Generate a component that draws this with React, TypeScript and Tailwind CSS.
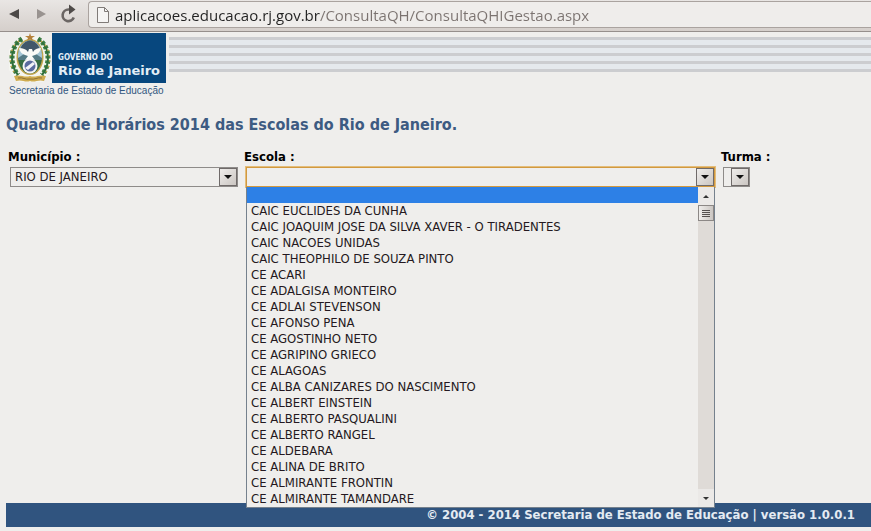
import { useState } from "react";
import type { ReactNode } from "react";

const SCHOOLS = [
  "",
  "CAIC EUCLIDES DA CUNHA",
  "CAIC JOAQUIM JOSE DA SILVA XAVER - O TIRADENTES",
  "CAIC NACOES UNIDAS",
  "CAIC THEOPHILO DE SOUZA PINTO",
  "CE ACARI",
  "CE ADALGISA MONTEIRO",
  "CE ADLAI STEVENSON",
  "CE AFONSO PENA",
  "CE AGOSTINHO NETO",
  "CE AGRIPINO GRIECO",
  "CE ALAGOAS",
  "CE ALBA CANIZARES DO NASCIMENTO",
  "CE ALBERT EINSTEIN",
  "CE ALBERTO PASQUALINI",
  "CE ALBERTO RANGEL",
  "CE ALDEBARA",
  "CE ALINA DE BRITO",
  "CE ALMIRANTE FRONTIN",
  "CE ALMIRANTE TAMANDARE",
];

const STRIPES = [1, 2, 3, 4, 5];

function BrowserBar() {
  return (
    <div className="flex h-8 items-start border-b border-[#968f8c] bg-linear-to-b from-[#e9e6e4] to-[#d5cfcb]">
      <div className="flex h-7 items-center">
        <button aria-label="Voltar" className="ml-2 flex w-7 justify-start">
          <svg width="12" height="12" viewBox="0 0 12 12">
            <path d="M1 6 11 1v10z" fill="#4c4947" />
          </svg>
        </button>
        <button aria-label="Avançar" className="flex w-6 justify-start">
          <svg width="12" height="12" viewBox="0 0 12 12">
            <path d="M10 6 1 1v10z" fill="#999390" />
          </svg>
        </button>
        <button aria-label="Recarregar" className="flex w-7 justify-start">
          <svg width="18" height="20" viewBox="0 0 18 20">
            <path d="M10 5.500H8.500a5.800 5.800 0 1 0 5.300 8" fill="none" stroke="#6b6664" strokeWidth="2.600" />
            <path d="M9 .5 15.500 5.500 9 10.500z" fill="#4f4b49" />
          </svg>
        </button>
      </div>
      <div className="mt-px flex h-[27px] flex-1 items-center rounded-l border border-r-0 border-[#aaa39f] bg-[#efedeb] pl-2">
        <svg width="12" height="16" viewBox="0 0 12 16" className="mr-1.5 shrink-0">
          <path d="M.5.5h7l4 4v11H.5z" fill="#f6f5f4" stroke="#807b78" />
          <path d="M7.500.5v4h4" fill="none" stroke="#807b78" />
        </svg>
        {/* the path part of the address is greyed out */}
        <input
          aria-label="Endereço"
          defaultValue="aplicacoes.educacao.rj.gov.br/ConsultaQH/ConsultaQHIGestao.aspx"
          className="min-w-0 flex-1 bg-linear-to-r from-[#222] from-[205px] to-[#7b7370] to-[205px] bg-clip-text font-['Open_Sans',sans-serif] text-[15px] leading-6 text-transparent outline-none"
        />
      </div>
    </div>
  );
}

function Crest() {
  return (
    <svg width="44" height="50" viewBox="0 0 44 50" aria-hidden="true">
      <path d="M13 3h18l12 14v20l-8 12H9L1 37V17z" fill="#f4f5f0" />
      <path d="M14 6C2 13 1 31 10 42M30 6c12 7 13 25 4 36" fill="none" stroke="#3f7f45" strokeWidth="5" strokeDasharray="3 2" />
      <path d="M14 6C2 13 1 31 10 42M30 6c12 7 13 25 4 36" fill="none" stroke="#2f6f3b" strokeWidth="2" />
      <path d="M11 8C1 15 0 30 6 39M33 8c10 7 11 22 5 31" fill="none" stroke="#c2a548" strokeWidth="1.500" strokeDasharray="1.500 4" />
      <ellipse cx="22" cy="24" rx="13.500" ry="18" fill="#c2a44c" />
      <ellipse cx="22" cy="24" rx="12" ry="16.500" fill="#356b42" />
      <path d="M10 25C9 15 15 7.500 22 7.500S35 15 34 25z" fill="#a5c5d4" />
      <path d="M12 16c2-5 6-8.500 10-8.500S30 11 32 16l-6 3h-8z" fill="#41576a" />
      <path d="m10 25 6-4 6 2 6-2 6 4v2H10z" fill="#557a84" />
      <path d="M11 15c4 0 7 1 9 4l1-3h3l1 3c2-3 4-4 8-4-1 4-3 6-6 7l-3 1 3 4-5-1-5 1 3-4-3-1c-3-1-5-3-6-7z" fill="#fafaf7" />
      <circle cx="22" cy="33" r="7.500" fill="#f5f5f6" />
      <circle cx="22" cy="33" r="5.500" fill="#596a9e" />
      <path d="m17 35 8-6 2 2-7 6z" fill="#f1f2f6" />
      <path d="M6 43c7-2 10 2 16 0 6 2 9-2 16 0l-2 5c-6-2-9 2-14 0-5 2-8-2-14 0z" fill="#cfab4e" />
      <path d="M10 45c5-1 7 2 12 1 5 1 7-2 12-1" fill="none" stroke="#8d7136" />
      <path d="m22 0 1 3h4l-3 2 1 3-3-2-3 2 1-3-3-2h4z" fill="#b5813b" />
    </svg>
  );
}

function Banner() {
  return (
    <header className="flex h-18">
      <div className="ml-2 w-40 shrink-0">
        <div className="flex w-[158px]">
          <Crest />
          <div className="flex h-[50px] flex-1 flex-col justify-end bg-[#07477e] pb-1 pl-1.5 font-bold whitespace-nowrap text-[#e3eef6]">
            <span className="text-[8px] leading-[10px]">GOVERNO DO</span>
            <span className="font-['DejaVu_Sans',sans-serif] text-[13px] leading-4">Rio de Janeiro</span>
          </div>
        </div>
        <p className="pl-px font-['Liberation_Sans',sans-serif] text-[10px] leading-4 whitespace-nowrap text-[#31577f]">
          Secretaria de Estado de Educação
        </p>
      </div>
      <div className="mt-1 ml-px flex flex-1 flex-col">
        {STRIPES.map((n) => (
          <div key={n} className="h-2 border-b-5 border-[#e5e9ed] bg-[#cccdd0] last:h-[3px] last:border-0" />
        ))}
      </div>
    </header>
  );
}

function ArrowBox() {
  return (
    <span className="pointer-events-none flex w-[18px] shrink-0 items-center justify-center border border-[#6f6a69] bg-linear-to-br from-[#efedeb] to-[#cbc6c2]">
      <svg width="8" height="4" viewBox="0 0 8 4">
        <path d="M0 0h8L4 4z" fill="#111" />
      </svg>
    </span>
  );
}

interface FieldProps {
  id: string;
  label: string;
  className: string;
  boxClass: string;
  children: ReactNode;
}

function Field({ id, label, className, boxClass, children }: FieldProps) {
  return (
    <div className={className}>
      <label htmlFor={id} className="-ml-0.5 block text-[13px] leading-5 font-bold whitespace-nowrap">
        {label}
      </label>
      <div className={`flex h-5 border ${boxClass}`}>
        {children}
        <ArrowBox />
      </div>
    </div>
  );
}

interface SchoolListProps {
  selected: string;
  onSelect: (school: string) => void;
}

function SchoolList({ selected, onSelect }: SchoolListProps) {
  return (
    <div className="absolute top-full left-0 z-10 flex w-full border border-t-0 border-[#75818d] bg-[#efeeec]">
      <ul role="listbox" aria-label="Escolas" className="flex-1">
        {SCHOOLS.map((school) => (
          <li
            key={school}
            role="option"
            aria-selected={school === selected}
            onClick={() => onSelect(school)}
            className={`h-4 pl-1 text-[13px] leading-4 whitespace-nowrap ${
              school === selected ? "bg-[#2d80e6]" : "text-[#241820]"
            }`}
          >
            {school}
          </li>
        ))}
      </ul>
      <div className="flex w-4 flex-col items-center bg-[#dfdbd7]">
        <span className="flex h-[18px] w-full items-center justify-center bg-[#ebe9e7]">
          <svg width="6" height="3" viewBox="0 0 6 3">
            <path d="M0 3h6L3 0z" fill="#333" />
          </svg>
        </span>
        <span className="flex h-4 w-full flex-col items-center justify-center gap-px border border-[#8c8886] bg-linear-to-r from-[#efedeb] to-[#cbc6c2]">
          <span className="h-px w-2 bg-[#55504e]" />
          <span className="h-px w-2 bg-[#55504e]" />
          <span className="h-px w-2 bg-[#55504e]" />
          <span className="h-px w-2 bg-[#55504e]" />
        </span>
        <span className="mt-auto flex h-[18px] w-full items-center justify-center bg-[#ebe9e7]">
          <svg width="6" height="3" viewBox="0 0 6 3">
            <path d="M0 0h6L3 3z" fill="#333" />
          </svg>
        </span>
      </div>
    </div>
  );
}

export default function App() {
  const [school, setSchool] = useState("");
  const [open, setOpen] = useState(true);

  const handleSelect = (value: string) => {
    setSchool(value);
    setOpen(false);
  };

  return (
    <div className="flex min-h-screen flex-col bg-[#efeeec] font-['DejaVu_Sans_Condensed','DejaVu_Sans',sans-serif] text-black">
      <BrowserBar />
      <div className="pt-px">
        <Banner />
      </div>

      <main className="flex-1 pl-1.5">
        <h1 className="pt-2 text-base leading-6 font-bold whitespace-nowrap text-[#3d5b82]">
          Quadro de Horários 2014 das Escolas do Rio de Janeiro.
        </h1>
        <div className="mt-2.5 ml-1 flex gap-2">
          <Field id="municipio" label="Município :" className="w-[228px]" boxClass="border-[#8e8b89]">
            <select id="municipio" className="min-w-0 flex-1 appearance-none bg-transparent pl-1 text-[13px] leading-4 text-[#241820] outline-none">
              <option>RIO DE JANEIRO</option>
            </select>
          </Field>
          <div className="relative w-[469px]">
            <Field id="escola" label="Escola :" className="" boxClass="border-[#d2993f] ring-1 ring-[#e3bd7b]">
              <select
                id="escola"
                value={school}
                onChange={(e) => setSchool(e.target.value)}
                onClick={() => setOpen(!open)}
                className="min-w-0 flex-1 appearance-none bg-transparent pl-1 text-[13px] leading-4 text-[#241820] outline-none"
              >
                {SCHOOLS.map((s) => (
                  <option key={s}>{s}</option>
                ))}
              </select>
            </Field>
            {open && <SchoolList selected={school} onSelect={handleSelect} />}
          </div>
          <Field id="turma" label="Turma :" className="w-[27px]" boxClass="border-[#8e8b89]">
            <select id="turma" className="min-w-0 flex-1 appearance-none bg-transparent outline-none" />
          </Field>
        </div>
      </main>

      <footer className="mb-1 ml-1.5 bg-[#30547f] pr-4 text-right text-[13px] leading-6 font-bold text-[#e4ebf2]">
        © 2004 - 2014 Secretaria de Estado de Educação | versão 1.0.0.1
      </footer>
    </div>
  );
}
